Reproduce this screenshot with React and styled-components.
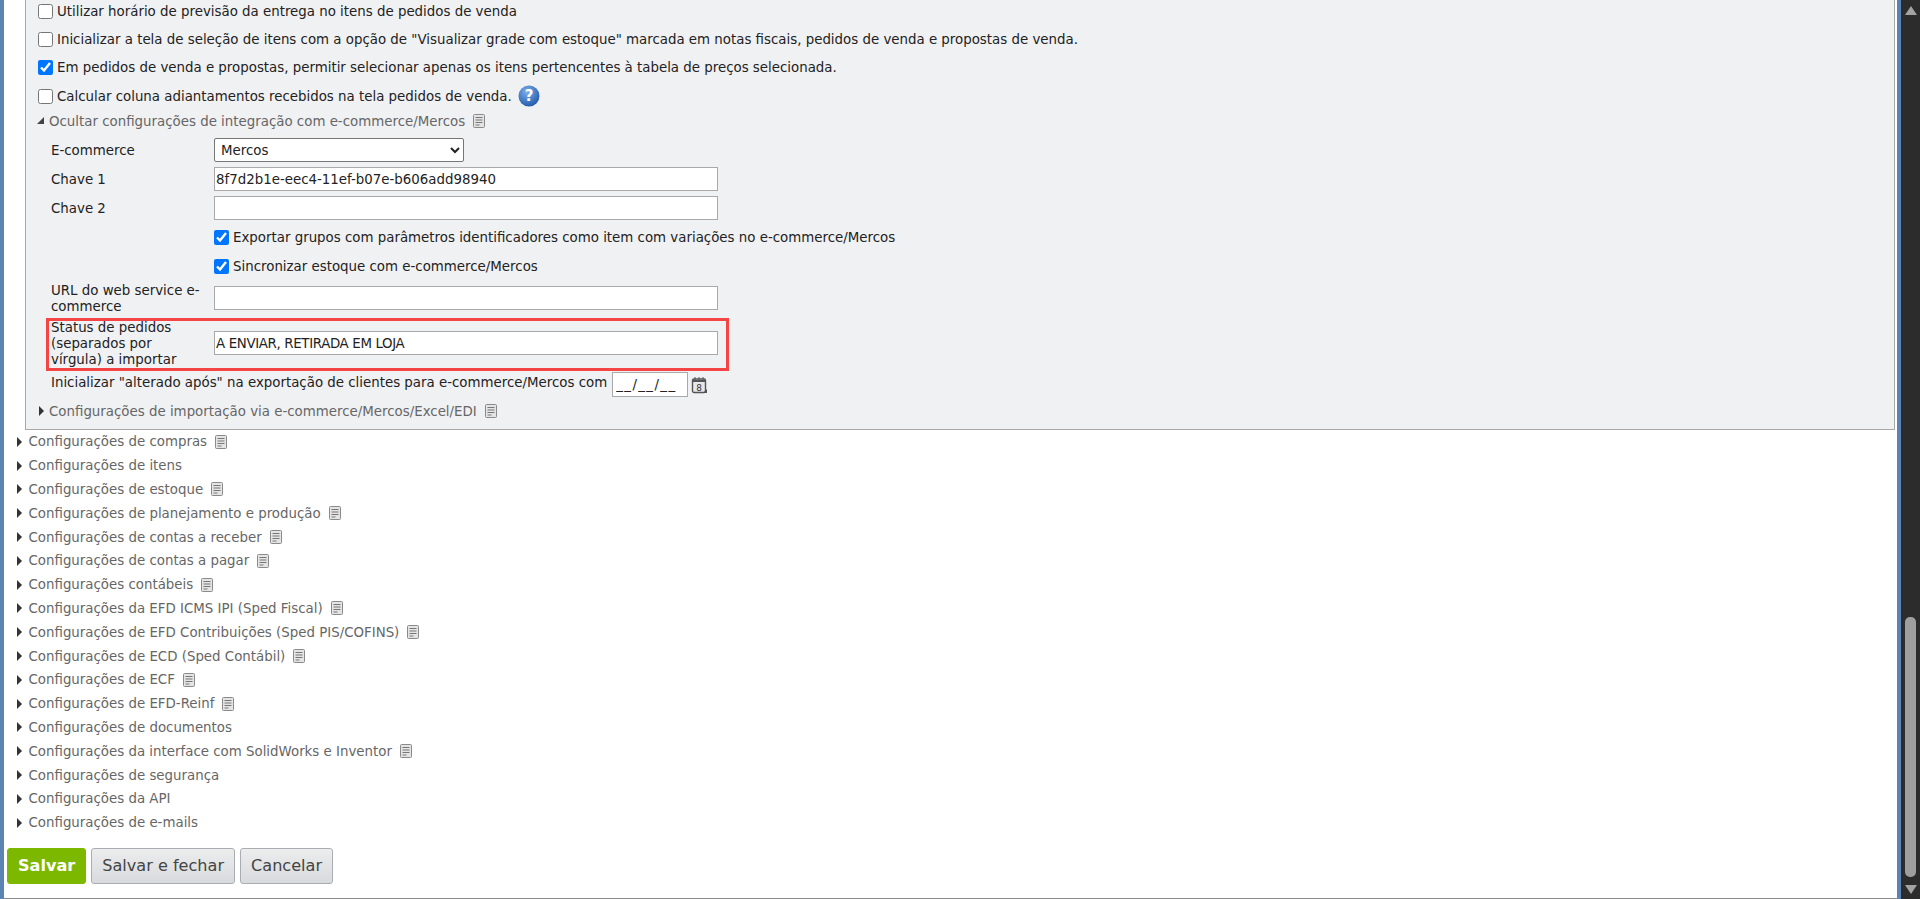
import React from "react";
import styled, { createGlobalStyle } from "styled-components";

const GlobalStyle = createGlobalStyle`
  html, body {
    margin: 0;
    padding: 0;
    height: 100%;
    overflow: hidden;
    background: #fff;
  }
  body {
    font-family: "DejaVu Sans", Verdana, sans-serif;
    font-size: 13.37px;
    color: #222;
  }
`;

const Shell = styled.div`
  display: flex;
  height: 899px;
  overflow: hidden;
`;

const LeftEdge = styled.div`
  flex: 0 0 4px;
  background: #5b84b5;
`;

const Main = styled.div`
  flex: 1;
  min-width: 0;
  padding-right: 2px;
  border-bottom: 1px solid #8a8a8a;
  box-sizing: border-box;
`;

const RightEdge = styled.div`
  flex: 0 0 4px;
  background: #5b84b5;
`;

const Scrollbar = styled.div`
  flex: 0 0 19px;
  background: #2c2c2c;
  display: flex;
  flex-direction: column;
  align-items: center;
  justify-content: space-between;
  padding: 6px 0 5px;
  box-sizing: border-box;
`;

const ScrollThumb = styled.div`
  width: 11px;
  height: 260px;
  margin-top: auto;
  margin-bottom: 8px;
  border-radius: 5px;
  background: #9f9f9f;
`;

const ScrollArrow = styled.div`
  width: 0;
  height: 0;
  border-left: 6px solid transparent;
  border-right: 6px solid transparent;
  border-${(p) => (p.$down ? "top" : "bottom")}: 9px solid #a3a3a3;
`;

const Panel = styled.div`
  margin: -3px 0 0 21px;
  height: 433px;
  box-sizing: border-box;
  background: #f0f1f3;
  border: 1px solid #a9a9a9;
  border-top: 0;
  padding-left: 12px;
`;

const CheckRow = styled.label`
  display: flex;
  align-items: center;
  gap: 4px;
  height: ${(p) => p.$height || 28.3}px;
  white-space: nowrap;
`;

const Check = styled.input.attrs({ type: "checkbox", readOnly: true })`
  width: 15px;
  height: 15px;
  margin: 0;
  flex: none;
`;

const Section = styled.div`
  display: flex;
  align-items: center;
  height: ${(p) => p.$height || 24}px;
  margin-top: ${(p) => p.$mt || 0}px;
  color: #666;
  white-space: nowrap;
`;

const Arrow = styled.span`
  flex: none;
  width: ${(p) => p.$gap || 12.5}px;
  margin-left: ${(p) => p.$shift || 0}px;
  display: flex;
`;

const OuterList = styled.div`
  padding-left: 12px;
`;

const Form = styled.div`
  padding-left: 8px;
  margin-top: 6px;
`;

const FormRow = styled.div`
  display: flex;
  align-items: center;
  width: 683px;
  height: ${(p) => p.$height}px;
  margin-bottom: ${(p) => p.$mb || 0}px;
  box-sizing: border-box;
`;

const HighlightRow = styled(FormRow)`
  padding-bottom: 3px;
  outline: 3px solid #f44444;
  outline-offset: -3px;
`;

const Label = styled.div`
  flex: 0 0 168px;
  box-sizing: border-box;
  padding: 2px 0 0 5px;
  line-height: 16px;
  color: #222;
`;

const TextInput = styled.input.attrs({ type: "text", readOnly: true })`
  width: 504px;
  height: 24px;
  margin: 0;
  padding: 0 1px;
  box-sizing: border-box;
  border: 1px solid #a9a9a9;
  background: #fff;
  font: 13.37px "DejaVu Sans", Verdana, sans-serif;
  letter-spacing: ${(p) => p.$tracking || 0}px;
  color: #222;
  outline: none;
`;

const Select = styled.select`
  width: 250px;
  height: 24px;
  padding: 0 0 0 2px;
  box-sizing: border-box;
  border: 1px solid #767676;
  border-radius: 2px;
  background: #fff;
  font: 13.37px "DejaVu Sans", Verdana, sans-serif;
  color: #222;
`;

const DateRow = styled.div`
  display: flex;
  align-items: center;
  height: 25px;
  margin-top: 1px;
  padding-left: 5px;
  white-space: nowrap;
`;

const DateText = styled.span`
  padding-bottom: 4px;
`;

const DateInput = styled.input.attrs({ type: "text", readOnly: true })`
  width: 76px;
  height: 25px;
  margin: 0 3px 0 5px;
  padding: 0 3px;
  box-sizing: border-box;
  border: 1px solid #a9a9a9;
  background: #fff;
  font: 13.37px "DejaVu Sans", Verdana, sans-serif;
  letter-spacing: 1.4px;
  color: #222;
  outline: none;
`;

const Toolbar = styled.div`
  display: flex;
  gap: 5px;
  margin: 13px 0 0 3px;
`;

const Button = styled.button`
  height: 36px;
  padding: 0 10px;
  box-sizing: border-box;
  border: 1px solid ${(p) => (p.$primary ? "#7cb800" : "#a9adb3")};
  border-radius: 3px;
  background: ${(p) =>
    p.$primary ? "#7cb800" : "linear-gradient(#eceded, #d8dadd)"};
  color: ${(p) => (p.$primary ? "#fff" : "#444")};
  font: ${(p) => (p.$primary ? "bold" : "normal")} 16.1px "DejaVu Sans", Verdana, sans-serif;
  white-space: nowrap;
`;

const DocIcon = () => (
  <svg width="12" height="14" viewBox="0 0 12 14" style={{ marginLeft: 8, flex: "none" }}>
    <rect x="0.5" y="0.5" width="11" height="13" rx="1" fill="#e4e4e4" stroke="#8a8a8a" />
    <path d="M2.5 3.5h7M2.5 6h7M2.5 8.5h7M2.5 11h4" stroke="#777" />
  </svg>
);

const RightTriangle = () => (
  <svg width="7" height="10" viewBox="0 0 7 10">
    <path d="M1 0l5 5-5 5z" fill="#333" />
  </svg>
);

const DownTriangle = () => (
  <svg width="8" height="8" viewBox="0 0 8 8">
    <path d="M0 7h7V0z" fill="#444" />
  </svg>
);

const HelpIcon = () => (
  <svg width="22" height="22" viewBox="0 0 22 22" style={{ marginLeft: 2, flex: "none" }}>
    <defs>
      <radialGradient id="help" cx="40%" cy="30%" r="75%">
        <stop offset="0%" stopColor="#7fb0ec" />
        <stop offset="100%" stopColor="#1d57a8" />
      </radialGradient>
    </defs>
    <circle cx="11" cy="11" r="10.5" fill="url(#help)" />
    <text x="11" y="16" textAnchor="middle" fontSize="15" fontWeight="700" fill="#fff" fontFamily="DejaVu Sans">
      ?
    </text>
  </svg>
);

const CalendarIcon = () => (
  <svg width="17" height="18" viewBox="0 0 17 18" style={{ flex: "none" }}>
    <rect x="1.5" y="3" width="13" height="13.5" rx="1.5" fill="#e8e8e8" stroke="#555" strokeWidth="1.4" />
    <path d="M1.5 5h13" stroke="#555" strokeWidth="2" />
    <path d="M4 1v3M8 1v3M12 1v3" stroke="#555" />
    <path d="M12 17l4-4v4z" fill="#555" />
    <text x="8" y="14.5" textAnchor="middle" fontSize="9" fill="#333" fontFamily="DejaVu Sans">
      8
    </text>
  </svg>
);

const sections = [
  ["Configurações de compras", true],
  ["Configurações de itens", false],
  ["Configurações de estoque", true],
  ["Configurações de planejamento e produção", true],
  ["Configurações de contas a receber", true],
  ["Configurações de contas a pagar", true],
  ["Configurações contábeis", true],
  ["Configurações da EFD ICMS IPI (Sped Fiscal)", true],
  ["Configurações de EFD Contribuições (Sped PIS/COFINS)", true],
  ["Configurações de ECD (Sped Contábil)", true],
  ["Configurações de ECF", true],
  ["Configurações de EFD-Reinf", true],
  ["Configurações de documentos", false],
  ["Configurações da interface com SolidWorks e Inventor", true],
  ["Configurações de segurança", false],
  ["Configurações da API", false],
  ["Configurações de e-mails", false],
];

export default function App() {
  return (
    <>
      <GlobalStyle />
      <Shell>
        <LeftEdge />
        <Main>
          <Panel>
            <CheckRow>
              <Check />
              Utilizar horário de previsão da entrega no itens de pedidos de venda
            </CheckRow>
            <CheckRow>
              <Check />
              Inicializar a tela de seleção de itens com a opção de "Visualizar grade com estoque" marcada em notas fiscais, pedidos de venda e propostas de venda.
            </CheckRow>
            <CheckRow>
              <Check defaultChecked />
              Em pedidos de venda e propostas, permitir selecionar apenas os itens pertencentes à tabela de preços selecionada.
            </CheckRow>
            <CheckRow>
              <Check />
              Calcular coluna adiantamentos recebidos na tela pedidos de venda.
              <HelpIcon />
            </CheckRow>
            <Section $height={22}>
              <Arrow $gap={12} $shift={-1}>
                <DownTriangle />
              </Arrow>
              Ocultar configurações de integração com e-commerce/Mercos
              <DocIcon />
            </Section>
            <Form>
              <FormRow $height={24} $mb={5}>
                <Label>E-commerce</Label>
                <Select defaultValue="Mercos">
                  <option>Mercos</option>
                </Select>
              </FormRow>
              <FormRow $height={24} $mb={5}>
                <Label>Chave 1</Label>
                <TextInput defaultValue="8f7d2b1e-eec4-11ef-b07e-b606add98940" />
              </FormRow>
              <FormRow $height={24} $mb={3}>
                <Label>Chave 2</Label>
                <TextInput />
              </FormRow>
              <FormRow $height={29}>
                <Label />
                <CheckRow $height={29}>
                  <Check defaultChecked />
                  Exportar grupos com parâmetros identificadores como item com variações no e-commerce/Mercos
                </CheckRow>
              </FormRow>
              <FormRow $height={29}>
                <Label />
                <CheckRow $height={29}>
                  <Check defaultChecked />
                  Sincronizar estoque com e-commerce/Mercos
                </CheckRow>
              </FormRow>
              <FormRow $height={33} $mb={4}>
                <Label>URL do web service e-commerce</Label>
                <TextInput />
              </FormRow>
              <HighlightRow $height={53}>
                <Label>
                  Status de pedidos
                  <br />
                  (separados por
                  <br />
                  vírgula) a importar
                </Label>
                <TextInput $tracking={-0.35} defaultValue="A ENVIAR, RETIRADA EM LOJA" />
              </HighlightRow>
              <DateRow>
                <DateText>
                  Inicializar "alterado após" na exportação de clientes para e-commerce/Mercos com
                </DateText>
                <DateInput defaultValue="__/__/__" />
                <CalendarIcon />
              </DateRow>
            </Form>
            <Section $height={26} $mt={1}>
              <Arrow $gap={11}>
                <RightTriangle />
              </Arrow>
              Configurações de importação via e-commerce/Mercos/Excel/EDI
              <DocIcon />
            </Section>
          </Panel>
          <OuterList>
            {sections.map(([name, doc]) => (
              <Section key={name} $height={23.8}>
                <Arrow>
                  <RightTriangle />
                </Arrow>
                {name}
                {doc && <DocIcon />}
              </Section>
            ))}
          </OuterList>
          <Toolbar>
            <Button $primary>Salvar</Button>
            <Button>Salvar e fechar</Button>
            <Button>Cancelar</Button>
          </Toolbar>
        </Main>
        <RightEdge />
        <Scrollbar>
          <ScrollArrow />
          <ScrollThumb />
          <ScrollArrow $down />
        </Scrollbar>
      </Shell>
    </>
  );
}
